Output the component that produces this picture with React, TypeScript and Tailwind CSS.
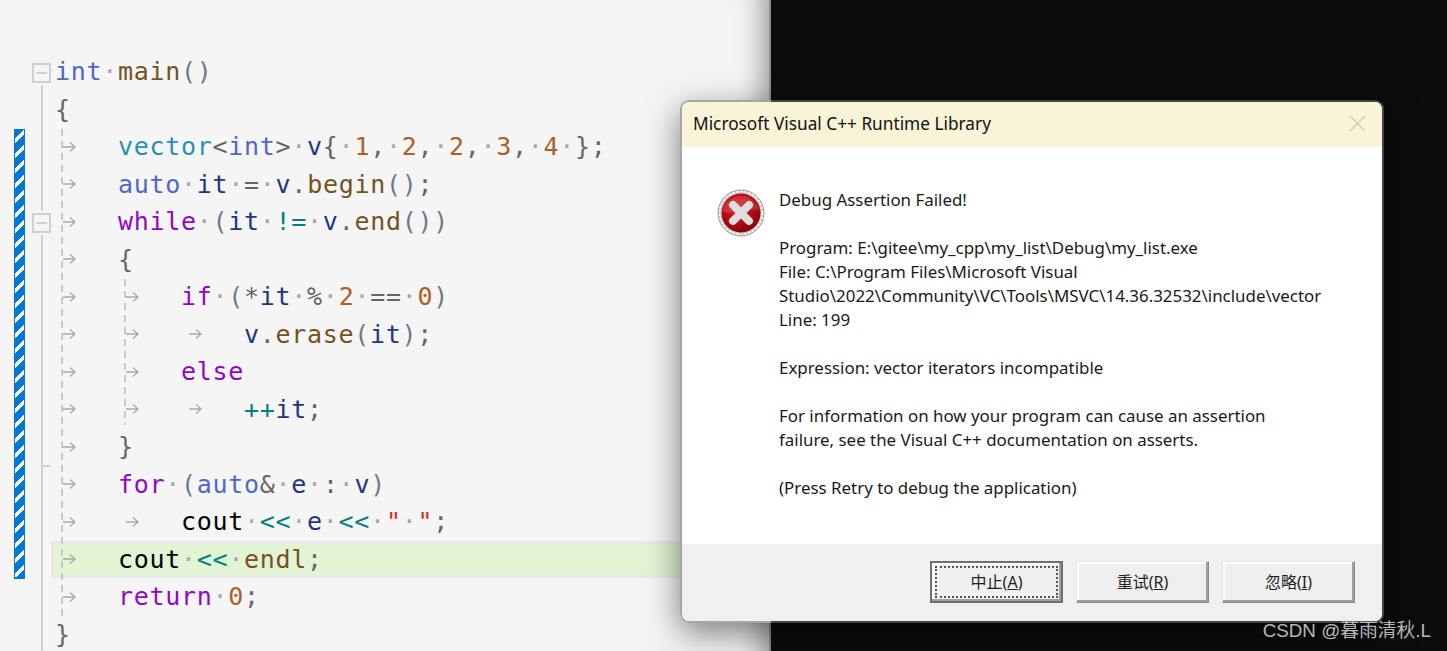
const C = {
  kw: "text-[#4f68c7]",
  ctl: "text-[#8f08c4]",
  fn: "text-[#74531f]",
  ty: "text-[#2b91af]",
  vr: "text-[#1f377f]",
  op: "text-[#008080]",
  num: "text-[#a8622a]",
  pn: "text-[#6d7b88]",
  gr: "text-[#666666]",
  blk: "text-[#000000]",
  str: "text-[#dc2a2a]",
  dot: "text-[#a8a8a8]",
};

type Seg = [string, string];
type Row = { tabs: number; segs: Seg[]; active?: boolean };

const d: Seg = ["·", C.dot];

const ROWS: Row[] = [
  { tabs: 0, segs: [["int", C.kw], d, ["main", C.fn], ["()", C.pn]] },
  { tabs: 0, segs: [["{", C.gr]] },
  {
    tabs: 1,
    segs: [
      ["vector", C.ty], ["<", C.gr], ["int", C.kw], [">", C.gr], d, ["v", C.vr], ["{", C.gr], d,
      ["1", C.num], [",", C.gr], d, ["2", C.num], [",", C.gr], d, ["2", C.num], [",", C.gr], d,
      ["3", C.num], [",", C.gr], d, ["4", C.num], d, ["}", C.gr], [";", C.gr],
    ],
  },
  {
    tabs: 1,
    segs: [["auto", C.kw], d, ["it", C.vr], d, ["=", C.gr], d, ["v", C.vr], [".", C.gr], ["begin", C.fn], ["()", C.pn], [";", C.gr]],
  },
  {
    tabs: 1,
    segs: [["while", C.ctl], d, ["(", C.pn], ["it", C.vr], d, ["!=", C.op], d, ["v", C.vr], [".", C.gr], ["end", C.fn], ["())", C.pn]],
  },
  { tabs: 1, segs: [["{", C.gr]] },
  {
    tabs: 2,
    segs: [["if", C.ctl], d, ["(", C.pn], ["*", C.gr], ["it", C.vr], d, ["%", C.gr], d, ["2", C.num], d, ["==", C.gr], d, ["0", C.num], [")", C.pn]],
  },
  { tabs: 3, segs: [["v", C.vr], [".", C.gr], ["erase", C.fn], ["(", C.pn], ["it", C.vr], [")", C.pn], [";", C.gr]] },
  { tabs: 2, segs: [["else", C.ctl]] },
  { tabs: 3, segs: [["++", C.op], ["it", C.vr], [";", C.gr]] },
  { tabs: 1, segs: [["}", C.gr]] },
  {
    tabs: 1,
    segs: [["for", C.ctl], d, ["(", C.pn], ["auto", C.kw], ["&", C.gr], d, ["e", C.vr], d, [":", C.gr], d, ["v", C.vr], [")", C.pn]],
  },
  {
    tabs: 2,
    segs: [["cout", C.blk], d, ["<<", C.op], d, ["e", C.vr], d, ["<<", C.op], d, ['"', C.str], d, ['"', C.str], [";", C.gr]],
  },
  { tabs: 1, active: true, segs: [["cout", C.blk], d, ["<<", C.op], d, ["endl", C.fn], [";", C.gr]] },
  { tabs: 1, segs: [["return", C.ctl], d, ["0", C.num], [";", C.gr]] },
  { tabs: 0, segs: [["}", C.gr]] },
];

function TabArrow() {
  return (
    <span className="inline-flex w-[63px] shrink-0 items-center pl-[7px]">
      <svg width="15" height="12" viewBox="0 0 15 12" fill="none" stroke="#a9a9a9" strokeWidth="1.3">
        <path d="M1 6h12M8 1.5 13 6l-5 4.5" />
      </svg>
    </span>
  );
}

function ErrorIcon() {
  return (
    <svg width="48" height="48" viewBox="0 0 48 48" className="shrink-0">
      <defs>
        <radialGradient id="redFill" cx="42%" cy="35%" r="70%">
          <stop offset="0%" stopColor="#d8202c" />
          <stop offset="60%" stopColor="#b30a10" />
          <stop offset="100%" stopColor="#7e0406" />
        </radialGradient>
      </defs>
      <circle cx="24" cy="24" r="23" fill="#cfcfcf" stroke="#9a9a9a" strokeWidth="1" />
      <circle cx="24" cy="24" r="21.5" fill="none" stroke="#ffffff" strokeWidth="1.5" strokeDasharray="2 2" />
      <circle cx="24" cy="24" r="19.5" fill="url(#redFill)" />
      <path d="M5 22a19.5 19.5 0 0 1 38 0c-10-5-27 6-38 0Z" fill="#ffffff" opacity="0.14" />
      <path d="M16 16 32 32M32 16 16 32" stroke="#dedede" strokeWidth="8" strokeLinecap="round" />
    </svg>
  );
}

function DialogButton({ label, hot, primary }: { label: string; hot: string; primary?: boolean }) {
  return (
    <button
      className={`flex h-[42px] w-[133px] items-center justify-center bg-[#efefef] text-[16px] text-[#222222] ${
        primary
          ? "border-2 border-[#6f6f6f] p-[3px] shadow-[inset_-2px_-2px_0_#a0a0a0,inset_2px_2px_0_#ffffff]"
          : "border border-[#8a8a8a] border-t-[#e4e4e4] border-l-[#e4e4e4] shadow-[inset_-2px_-2px_0_#a0a0a0,inset_2px_2px_0_#ffffff]"
      }`}
    >
      <span
        className={`flex h-full w-full items-center justify-center ${
          primary ? "border-2 border-dotted border-[#555555]" : ""
        }`}
      >
        {label}(<span className="underline">{hot}</span>)
      </span>
    </button>
  );
}

export default function App() {
  return (
    <div className="relative flex h-[651px] w-[1447px] overflow-hidden bg-[#0c0c0c]">
      {/* editor */}
      <div className="flex h-full w-[771px] border-r-2 border-[#8e8e8e] bg-[#f5f5f5] pl-[14px] shadow-[inset_-30px_0_26px_-22px_rgba(0,0,0,0.35)]">
        <div className="mr-[7px] mt-[129px] h-[450px] w-[11px] border-x border-b-2 border-[#0078d4] bg-[repeating-linear-gradient(135deg,#0078d4_0,#0078d4_7px,#ffffff_7px,#ffffff_10.6px)]" />

        <div className="flex w-[19px] flex-col pt-[63px]">
          <div className="flex h-[20px] w-[19px] items-center justify-center border-2 border-[#d0d0d0]">
            <div className="h-[2px] w-[11px] bg-[#d0d0d0]" />
          </div>
          <div className="my-[2px] ml-[9px] h-[126px] w-[2px] bg-[#d0d0d0]" />
          <div className="flex h-[20px] w-[19px] items-center justify-center border-2 border-[#d0d0d0]">
            <div className="h-[2px] w-[11px] bg-[#d0d0d0]" />
          </div>
          <div className="relative ml-[9px] mt-[2px] w-[2px] flex-1 bg-[#d0d0d0]">
            <div className="absolute left-[2px] top-[230px] h-[2px] w-[7px] bg-[#d0d0d0]" />
          </div>
        </div>

        <div className="relative flex-1 pt-[53px] font-['DejaVu_Sans_Mono',monospace] text-[25px] tracking-[0.7px]">
          {/* indent guides */}
          <div className="absolute left-[10px] top-[129px] z-10 h-[490px] w-[2px] bg-[repeating-linear-gradient(180deg,#c8c8c8_0,#c8c8c8_7px,transparent_7px,transparent_12px)]" />
          <div className="absolute left-[73px] top-[279px] z-10 h-[146px] w-[2px] bg-[repeating-linear-gradient(180deg,#c8c8c8_0,#c8c8c8_7px,transparent_7px,transparent_12px)]" />
          {ROWS.map((row, i) => (
            <div
              key={i}
              className={`flex h-[37.5px] items-center whitespace-pre ${
                row.active ? "border-[3px] border-r-0 border-[#e9e9e9] bg-[#e3f4d5] pl-[1px]" : "pl-[4px]"
              }`}
            >
              {Array.from({ length: row.tabs }).map((_, t) => (
                <TabArrow key={t} />
              ))}
              <span>
                {row.segs.map((s, j) => (
                  <span key={j} className={s[1]}>
                    {s[0]}
                  </span>
                ))}
              </span>
            </div>
          ))}
        </div>
      </div>

      {/* assertion dialog */}
      <div className="absolute left-[680px] top-[100px] z-20 h-[523px] w-[704px] rounded-[9px] bg-[linear-gradient(90deg,#a6a6a6_0,#a6a6a6_91px,#444444_91px,#444444_100%)] p-[2px] shadow-[0_10px_34px_rgba(0,0,0,0.5)]">
        <div className="flex h-full w-full flex-col overflow-hidden rounded-[7px] bg-white font-['Noto_Sans','Noto_Sans_CJK_SC',sans-serif]">
          <div className="flex h-[45px] shrink-0 items-center justify-between bg-[#f9f4d8] pb-[2px] pl-[11px] pr-[16px] text-[17.25px] text-[#111111]">
            <span>Microsoft Visual C++ Runtime Library</span>
            <svg width="17" height="17" viewBox="0 0 17 17" stroke="#cfcbb6" strokeWidth="1.4" fill="none">
              <path d="M1 1l15 15M16 1 1 16" />
            </svg>
          </div>
          <div className="flex flex-1 items-start bg-white pl-[35px] pt-[42px]">
            <ErrorIcon />
            <div className="ml-[14px] mt-[-1px] text-[16.9px] leading-[24px] text-[#1a1a1a]">
              <p className="mb-[24px]">Debug Assertion Failed!</p>
              <p>Program: E:\gitee\my_cpp\my_list\Debug\my_list.exe</p>
              <p>File: C:\Program Files\Microsoft Visual</p>
              <p>Studio\2022\Community\VC\Tools\MSVC\14.36.32532\include\vector</p>
              <p className="mb-[24px]">Line: 199</p>
              <p className="mb-[24px]">Expression: vector iterators incompatible</p>
              <p>For information on how your program can cause an assertion</p>
              <p className="mb-[24px]">failure, see the Visual C++ documentation on asserts.</p>
              <p>(Press Retry to debug the application)</p>
            </div>
          </div>
          <div className="flex h-[77px] shrink-0 items-start justify-end gap-[13px] bg-[#f0f0f0] pr-[27px] pt-[17px]">
            <DialogButton label="中止" hot="A" primary />
            <DialogButton label="重试" hot="R" />
            <DialogButton label="忽略" hot="I" />
          </div>
        </div>
      </div>

      {/* watermark */}
      <span className="absolute bottom-[6px] right-[16px] z-30 font-['Liberation_Sans','Noto_Sans_CJK_SC',sans-serif] text-[18.8px] text-[#b8b8b8]">
        CSDN @暮雨清秋.L
      </span>
    </div>
  );
}
